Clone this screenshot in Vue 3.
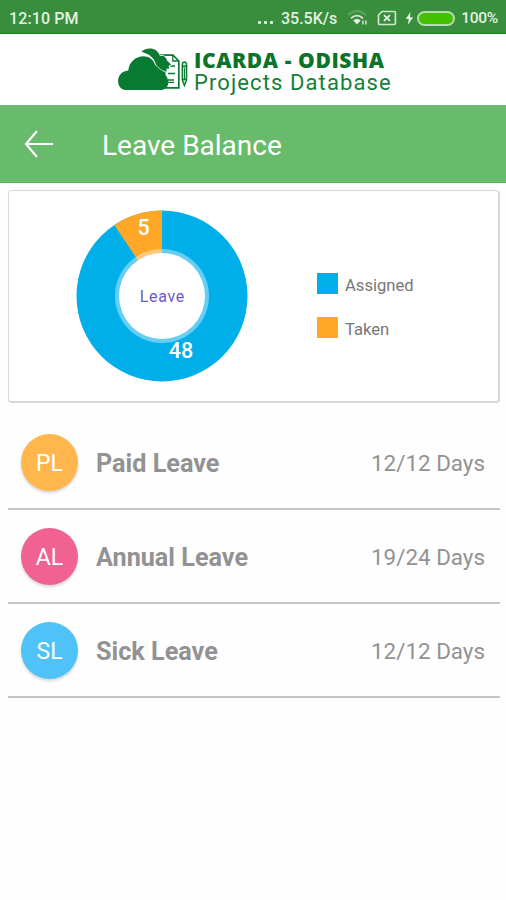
<template>
  <div class="page">
    <!-- status bar -->
    <div class="status">
      <span class="time">12:10 PM</span>
      <span class="dots"><i></i><i></i><i></i></span>
      <span class="speed">35.5K/s</span>
      <svg class="wifi" width="22" height="18" viewBox="0 0 22 18">
        <g fill="none" stroke="#fff" stroke-width="1.8">
          <path d="M1 6 Q10 -2 19 6" opacity=".2" />
          <path d="M4 9.2 Q10 4 16 9.2" opacity=".8" />
        </g>
        <path d="M6.3 11.6 Q10 8.6 13.7 11.6 L10 15.5Z" fill="#e6f3e6" />
        <path d="M16 11.500v4M19 11.500v4" stroke="#b5d8b6" stroke-width="1.8" />
      </svg>
      <svg class="sim" width="20" height="16" viewBox="0 0 20 16">
        <path d="M5 1.5H17.3Q18.5 1.5 18.5 2.7V13.3Q18.5 14.5 17.3 14.5H2.7Q1.5 14.5 1.5 13.3V5Z" fill="none" stroke="#cfe6cf" stroke-width="1.7" />
        <path d="M7 5L13 11M13 5L7 11" stroke="#e6f3e6" stroke-width="1.8" />
      </svg>
      <svg class="bolt" width="9" height="13" viewBox="0 0 9 14">
        <path d="M5.5 0L0.5 7.6H3.8L2.6 14L8.5 5.6H5Z" fill="#e6f3e6" />
      </svg>
      <span class="battery"></span>
      <span class="percent">100%</span>
    </div>

    <!-- logo -->
    <div class="brand">
      <svg width="72" height="44" viewBox="117 47 72 44">
        <path d="M160 55.2H173L178.8 61V87.8H162" fill="none" stroke="#0b7a33" stroke-width="1.7" />
        <path d="M172.8 55.5V61H178.5" fill="none" stroke="#0b7a33" stroke-width="1.3" />
        <path d="M170 66H175M168 73.5H175M168 80H174M168 82.3H174" stroke="#0b7a33" stroke-width="1.3" />
        <path d="M182.3 65V80L184.4 85.6L186.6 80V65Q186.6 62 184.4 62Q182.3 62 182.3 65Z" fill="#d6eadb" stroke="#0b7a33" stroke-width="1.4" />
        <path d="M182 66.3H187M182 79.5H187" stroke="#0b7a33" stroke-width="1.7" />
        <path d="M184.5 68V79" stroke="#0b7a33" stroke-width="1.2" />
        <path d="M125 90C115.500 89 115 71.500 128.300 70.500C130 54.500 151 51 155.500 65.500C162 64.500 166.500 69.500 165.500 75C170.500 81 168.500 89 162 90Z" fill="#087a32" />
        <path d="M141.500 51.800C147 46.500 157.500 47.500 160 56C163.500 55 166 57 167 60.500L171 64.500L168.500 66L169.500 68.500L166.500 68.800L166.500 72C161 69.500 157.500 67.500 155.500 63.500C154 57.500 149 54 141.500 51.800Z" fill="#087a32" stroke="#fff" stroke-width="1.6" paint-order="stroke" />
      </svg>
      <div class="brand-text">
        <div class="brand-name">ICARDA - ODISHA</div>
        <div class="brand-sub">Projects Database</div>
      </div>
    </div>

    <!-- toolbar -->
    <div class="toolbar">
      <svg width="30" height="30" viewBox="0 0 30 30">
        <path d="M29 15H2M13 2L2 15L13 28" fill="none" stroke="#fff" stroke-width="2.2" />
      </svg>
      <h1>Leave Balance</h1>
    </div>

    <!-- chart -->
    <div class="card">
      <svg class="chart" width="172" height="172" viewBox="-86 -86 172 172">
        <circle r="85.500" fill="#00aeea" />
        <path :d="slice" fill="#ffa726" />
        <circle r="47" fill="#fff" opacity=".4" />
        <circle r="43" fill="#fff" />
        <text class="value" x="-18.500" y="-61.500">{{ taken }}</text>
        <text class="value" x="19" y="62">{{ assigned }}</text>
        <text class="center" x="0.300" y="5.500">Leave</text>
      </svg>
      <ul class="legend">
        <li><i class="assigned"></i><span>Assigned</span></li>
        <li><i class="taken"></i><span>Taken</span></li>
      </ul>
    </div>

    <!-- leave list -->
    <ul class="list">
      <li v-for="item in leaves" :key="item.code">
        <span class="avatar" :class="item.code.toLowerCase()">{{ item.code }}</span>
        <span class="name">{{ item.name }}</span>
        <span class="days">{{ item.left }}/{{ item.total }} Days</span>
      </li>
    </ul>
  </div>
</template>

<script setup>
import { ref, computed } from "vue";

let assigned = ref(48);
let taken = ref(5);
let leaves = ref([
  { code: "PL", name: "Paid Leave", left: 12, total: 12 },
  { code: "AL", name: "Annual Leave", left: 19, total: 24 },
  { code: "SL", name: "Sick Leave", left: 12, total: 12 },
]);

// taken slice ends at 12 o'clock
let slice = computed(() => {
  const r = 85.5;
  const angle = (taken.value / (assigned.value + taken.value)) * Math.PI * 2;
  const x = -Math.sin(angle) * r;
  const y = -Math.cos(angle) * r;
  return `M0 0L${x} ${y}A${r} ${r} 0 0 1 0 ${-r}Z`;
});
</script>

<style>
body {
  background: #fff;
}
</style>

<style scoped>
.page {
  height: 900px;
  overflow: hidden;
  background: #fefefe;
  font-family: Roboto, "Liberation Sans", sans-serif;
}
ul {
  list-style: none;
  margin: 0;
  padding: 0;
}
.status {
  display: flex;
  align-items: center;
  box-sizing: border-box;
  height: 34px;
  padding: 3px 8px 0 9px;
  background: #388e3c;
  border-bottom: 1px solid #128116;
  color: #e3f1e3;
  font-size: 16px;
  font-weight: 500;
  white-space: nowrap;
}
.time {
  width: 250px;
  letter-spacing: 0.1px;
}
.dots {
  display: flex;
  gap: 3px;
  width: 21px;
  padding-top: 9px;
}
.dots i {
  width: 3px;
  height: 3px;
  border-radius: 1px;
  background: #e3f1e3;
}
.speed {
  width: 66px;
  padding-left: 2px;
}
.wifi {
  width: 22px;
  margin-right: 8px;
}
.sim {
  margin-right: 8px;
}
.bolt {
  margin-right: 4px;
}
.battery {
  box-sizing: border-box;
  width: 38px;
  height: 15px;
  margin-right: 6px;
  border: 2px solid #b4dcb0;
  border-radius: 8px;
  background: #43c000;
}
.percent {
  font-size: 15.5px;
  letter-spacing: -0.3px;
}
.brand {
  display: flex;
  box-sizing: border-box;
  height: 71px;
  padding: 13px 0 0 117px;
  background: #fff;
}
.brand-text {
  padding-left: 5px;
  color: #0b7428;
  white-space: nowrap;
}
.brand-name {
  font: 800 21px/26px "Open Sans", sans-serif;
  letter-spacing: 0.6px;
}
.brand-sub {
  font-size: 22px;
  line-height: 20px;
  letter-spacing: 1.1px;
  color: #14803a;
}
.toolbar {
  display: flex;
  align-items: center;
  box-sizing: border-box;
  height: 78px;
  padding-left: 24px;
  background: #68bb6b;
  border-bottom: 1px solid #57b45b;
  color: #fff;
}
.toolbar h1 {
  margin: 3px 0 0 48px;
  font-size: 28px;
  font-weight: 400;
}
.card {
  display: flex;
  align-items: flex-start;
  box-sizing: border-box;
  height: 213px;
  margin: 7px 6px 0 8px;
  padding: 18.500px 0 0 67px;
  border: 1px solid #d8d8d8;
  border-width: 1px 2px 2px 1px;
  border-radius: 4px;
  background: #fff;
}
.chart text {
  text-anchor: middle;
}
.value {
  fill: #fff;
  font-size: 21.5px;
  font-weight: 500;
}
.center {
  fill: #6a5acd;
  font-size: 16px;
  letter-spacing: 0.7px;
}
.legend {
  padding: 63.500px 0 0 69px;
}
.legend li {
  display: flex;
  align-items: center;
  height: 21px;
  margin-bottom: 23px;
  color: #777;
  font-size: 16.6px;
}
.legend i {
  width: 21px;
  height: 21px;
  margin-right: 7px;
}
.legend span {
  padding-top: 3px;
}
.assigned {
  background: #00aeea;
}
.taken {
  background: #ffa726;
}
.list {
  margin: 13px 6px 0 8px;
}
.list li {
  display: flex;
  align-items: center;
  box-sizing: border-box;
  height: 94px;
  padding: 0 15px 0 13px;
  border-bottom: 2px solid #c4c4c4;
  color: #929292;
}
.avatar {
  width: 57px;
  height: 57px;
  border-radius: 50%;
  box-shadow: 0 2px 3px rgba(0, 0, 0, 0.16);
  color: #fff;
  font-size: 23px;
  line-height: 59px;
  text-align: center;
}
.pl {
  background: #ffb74d;
}
.al {
  background: #f06292;
}
.sl {
  background: #4fc3f7;
}
.name {
  flex: 1;
  padding: 2px 0 0 18px;
  font-size: 25.2px;
  font-weight: 700;
}
.days {
  padding-top: 1px;
  font-size: 22.4px;
}
</style>
